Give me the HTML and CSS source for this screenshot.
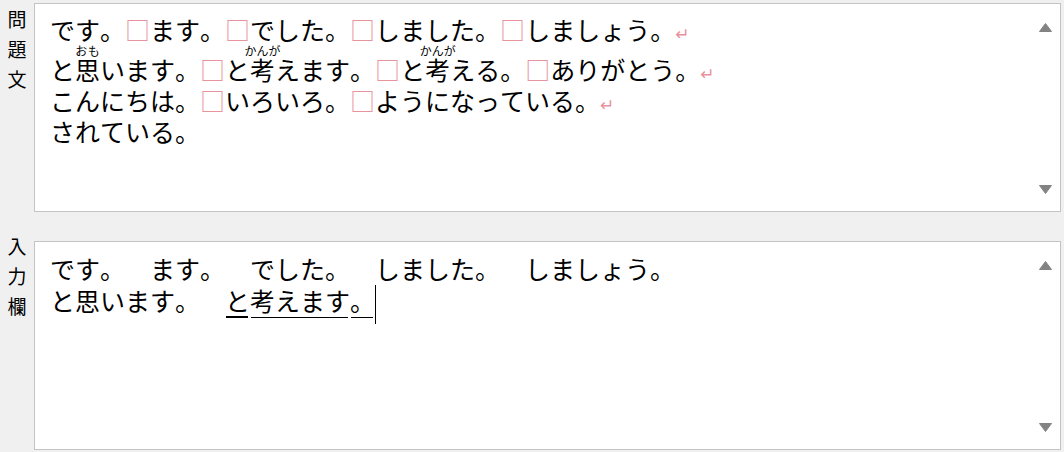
FILE: index.html
```html
<!DOCTYPE html>
<html lang="ja">
<head>
<meta charset="utf-8">
<title>問題文 / 入力欄</title>
<link rel="stylesheet" href="styles.css">
</head>
<body>
<div class="page">
  <div class="row row-question">
    <div class="label label-question"><span>問</span><span>題</span><span>文</span></div>
    <div class="box">
      <div class="text">
        <div class="line">です。<span class="sq">□</span>ます。<span class="sq">□</span>でした。<span class="sq">□</span>しました。<span class="sq">□</span>しましょう。<span class="ret">↵</span></div>
        <div class="line line-ruby">と<ruby>思<rt>おも</rt></ruby>います。<span class="sq">□</span>と<ruby>考<rt>かんが</rt></ruby>えます。<span class="sq">□</span>と<ruby>考<rt>かんが</rt></ruby>える。<span class="sq">□</span>ありがとう。<span class="ret">↵</span></div>
        <div class="line">こんにちは。<span class="sq">□</span>いろいろ。<span class="sq">□</span>ようになっている。<span class="ret">↵</span></div>
        <div class="line">されている。</div>
      </div>
      <div class="scroll">
        <svg class="arrow" viewBox="0 0 13 9" width="13" height="9"><polygon points="6.5,0.5 12.5,8.5 0.5,8.5" fill="#838383" stroke="#838383" stroke-linejoin="round"/></svg>
        <svg class="arrow" viewBox="0 0 13 9" width="13" height="9"><polygon points="0.5,0.5 12.5,0.5 6.5,8.5" fill="#838383" stroke="#838383" stroke-linejoin="round"/></svg>
      </div>
    </div>
  </div>
  <div class="row row-input">
    <div class="label label-input"><span>入</span><span>力</span><span>欄</span></div>
    <div class="box">
      <div class="text text-input">
        <div class="line">です。　ます。　でした。　しました。　しましょう。</div>
        <div class="line">と思います。　<span class="comp comp-active">と</span><span class="comp">考えます</span><span class="comp">。</span><span class="caret"></span></div>
      </div>
      <div class="scroll">
        <svg class="arrow" viewBox="0 0 13 9" width="13" height="9"><polygon points="6.5,0.5 12.5,8.5 0.5,8.5" fill="#838383" stroke="#838383" stroke-linejoin="round"/></svg>
        <svg class="arrow" viewBox="0 0 13 9" width="13" height="9"><polygon points="0.5,0.5 12.5,0.5 6.5,8.5" fill="#838383" stroke="#838383" stroke-linejoin="round"/></svg>
      </div>
    </div>
  </div>
</div>
</body>
</html>
```
FILE: styles.css
```css
html, body {
  margin: 0;
  padding: 0;
}
body {
  background: #f0f0f0;
  font-family: "Noto Sans CJK JP", "Noto Sans", sans-serif;
  color: #000;
  width: 1064px;
  height: 452px;
  overflow: hidden;
}
.page {
  display: flex;
  flex-direction: column;
  gap: 29px;
  padding: 3px 3px 0 0;
}
.row {
  display: flex;
  align-items: flex-start;
}
.label {
  width: 34px;
  flex: none;
  display: flex;
  flex-direction: column;
  align-items: center;
  font-size: 19px;
  line-height: 30px;
}
.label-question {
  margin-top: 1px;
}
.label-input {
  margin-top: -10px;
}
.box {
  flex: 1;
  height: 207px;
  background: #fff;
  border: 1px solid #c4c4c4;
  display: flex;
}
.text {
  flex: 1;
  padding: 10px 0 0 15px;
  font-size: 25px;
  line-height: 31px;
  white-space: nowrap;
  text-spacing-trim: space-all;
  font-kerning: none;
  font-feature-settings: normal;
}
.text-input .line {
  line-height: 32px;
}
rt {
  font-size: 12px;
  line-height: 10px;
}
.sq {
  color: #e8949f;
}
.ret {
  color: #e8909c;
  font-size: 17px;
  line-height: 0;
  margin-left: 0;
  font-family: "DejaVu Sans", sans-serif;
}
.comp {
  background-image: linear-gradient(#000, #000);
  background-repeat: no-repeat;
  background-size: calc(100% - 3px) 1px;
  background-position: 1px 100%;
}
.comp-active {
  background-size: calc(100% - 3px) 2px;
}
.caret {
  display: inline-block;
  width: 0;
  height: 39px;
  margin: -4px 0;
  border-left: 1px solid #000;
  vertical-align: -9px;
}
.scroll {
  width: 17px;
  flex: none;
  margin-right: 6px;
  padding: 19px 0 17px;
  display: flex;
  flex-direction: column;
  justify-content: space-between;
  align-items: center;
}
.arrow {
  display: block;
}
```
